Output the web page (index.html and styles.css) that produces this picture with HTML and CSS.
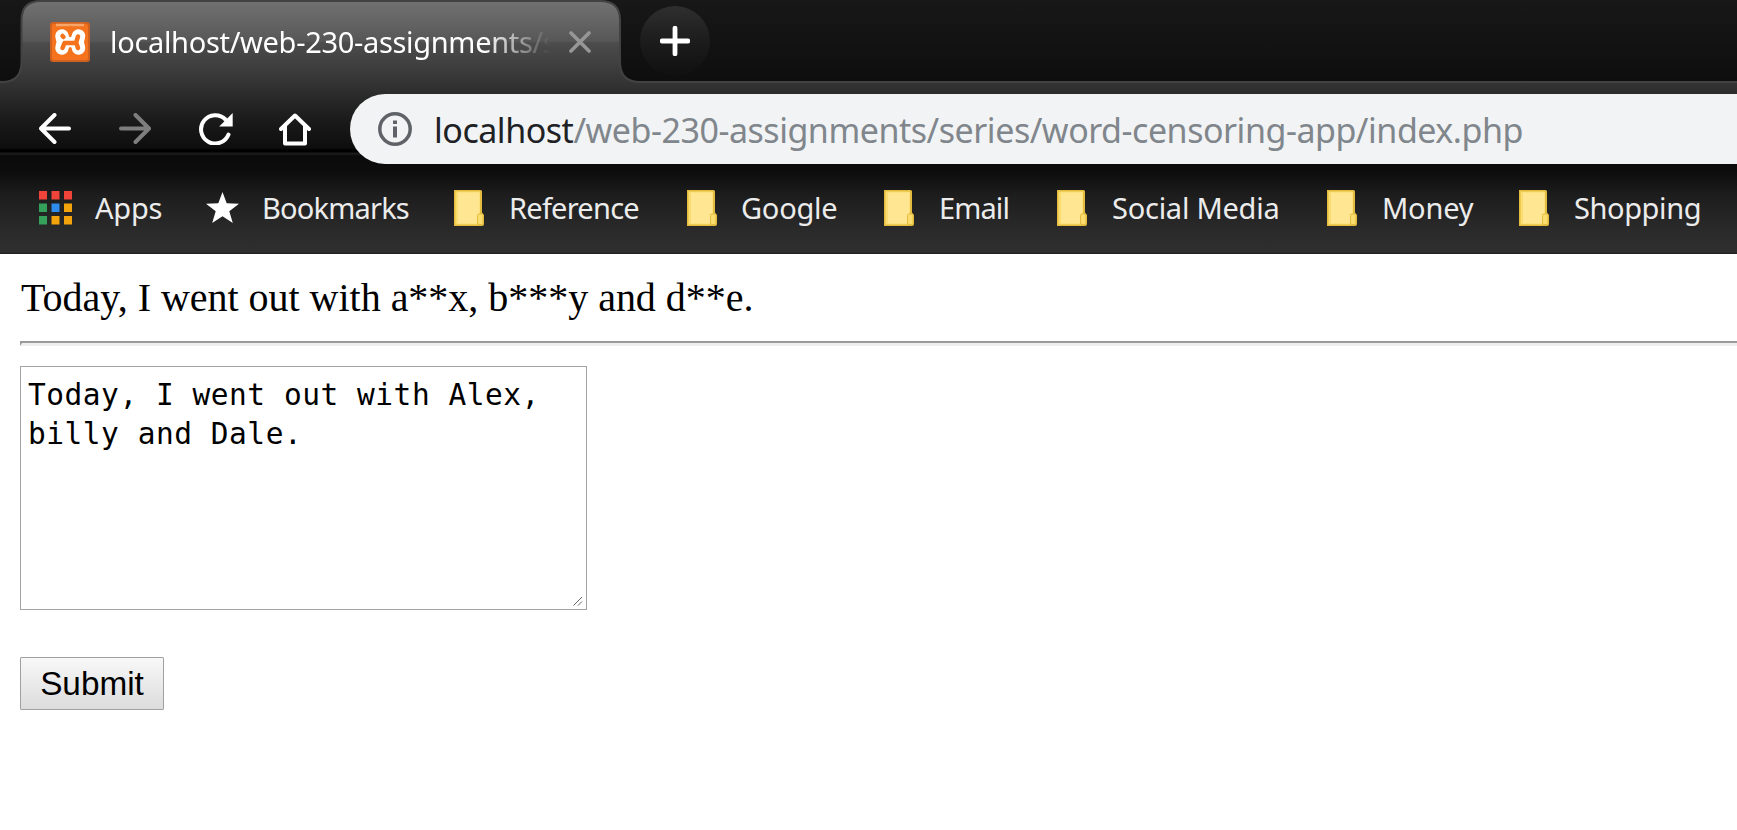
FILE: index.html
```html
<!DOCTYPE html>
<html lang="en">
<head>
<meta charset="utf-8">
<title>localhost/web-230-assignments/series/word-censoring-app/index.php</title>
<link rel="stylesheet" href="styles.css">
</head>
<body>
<svg class="defs" width="0" height="0" aria-hidden="true">
  <symbol id="folder" viewBox="0 0 30 36">
    <path d="M0 0H26.5Q28 0 28 1.5V22.5L30 25V34Q30 36 28 36H0Z" fill="#e3bc3f"/>
    <path d="M1.5 1.5H26V34.500H1.500Z" fill="#fbdc6f"/>
    <path d="M4 2.500H25.500V23L23 25.500V33.500H4Z" fill="#ffe692"/>
    <rect x="23.500" y="24" width="5.500" height="10.500" rx="1.500" fill="#fbdc6f" stroke="#e3bc3f"/>
  </symbol>
</svg>
<header class="browser">
  <div class="tabstrip">
    <svg class="strip-shape" width="1737" height="84" viewBox="0 0 1737 84">
      <path d="M-4 -4H1741V82H640Q620 82 620 62V20Q620 1 600 1H41Q21.500 1 21.500 20V62Q21.500 82 2 82H-4Z" fill="url(#stripfill)" stroke="#424242" stroke-width="2"/>
      <defs><linearGradient id="stripfill" x1="0" y1="0" x2="0" y2="1"><stop offset="0" stop-color="#181818"/><stop offset="1" stop-color="#0e0e0e"/></linearGradient></defs>
    </svg>
    <div class="tab">
      <svg class="favicon" width="40" height="40" viewBox="0 0 40 40">
        <rect width="40" height="40" rx="3" fill="#cf6220"/>
        <rect x="2" y="2" width="36" height="36" rx="2" fill="#f4731c"/>
        <path d="M6 3H34" stroke="#f7a66c" stroke-width="2.500"/>
        <path d="M12 14L13.500 20L12 26M28.500 14L27 20L28.500 26M13 20H27" fill="none" stroke="#fff" stroke-width="13.500" stroke-linejoin="round" stroke-linecap="round"/>
        <path d="M20.200 5V13.500M20.200 26.500V35" stroke="#f4731c" stroke-width="3" stroke-linecap="round"/>
        <path d="M12.500 26L14.500 21H26L28 14.500M26 20L28 26M12.500 14L13.500 15" fill="none" stroke="#f4731c" stroke-width="4.500" stroke-linejoin="round" stroke-linecap="round"/>
      </svg>
      <span class="tab-title">localhost/web-230-assignments/s</span>
      <svg class="tab-close" width="22" height="22" viewBox="0 0 22 22"><path d="M2 2L20 20M20 2L2 20" stroke="#979797" stroke-width="3.600" stroke-linecap="round"/></svg>
    </div>
    <div class="new-tab"><svg width="30" height="30" viewBox="0 0 30 30"><path d="M15 2.200V27.800M2.200 15H27.800" stroke="#fff" stroke-width="4.800" stroke-linecap="round"/></svg></div>
  </div>
  <nav class="toolbar">
    <svg class="nav-icon" width="32" height="32" viewBox="0 0 32 32"><path d="M15.500 2L2 15.500L15.500 29M2.500 15.500H30" fill="none" stroke="#fff" stroke-width="4" stroke-linecap="round" stroke-linejoin="round"/></svg>
    <svg class="nav-icon" width="32" height="32" viewBox="0 0 32 32"><path d="M16.500 2L30 15.500L16.500 29M29.500 15.500H2" fill="none" stroke="#7e7e7e" stroke-width="4" stroke-linecap="round" stroke-linejoin="round"/></svg>
    <svg class="nav-icon" width="34" height="32" viewBox="0 0 34 32"><path d="M26.500 6.500A14.200 14.200 0 1 0 29.500 21.500" fill="none" stroke="#fff" stroke-width="4" stroke-linecap="round"/><path d="M33.700 0V13.500H20.200Z" fill="#fff"/></svg>
    <svg class="nav-icon" width="32" height="33" viewBox="0 0 32 33"><path d="M2 16L16 2.500L30 16M6 13.500V30.500H26V13.500" fill="none" stroke="#fff" stroke-width="4" stroke-linecap="round" stroke-linejoin="round"/></svg>
    <div class="omnibox">
      <svg class="info" width="34" height="34" viewBox="0 0 34 34"><circle cx="17" cy="17" r="15.200" fill="none" stroke="#5f6368" stroke-width="3.500"/><path d="M17 14.500V25.500M17 8.500V12" stroke="#5f6368" stroke-width="4"/></svg>
      <span class="url"><span class="host">localhost</span><span class="path">/web-230-assignments/series/word-censoring-app/index.php</span></span>
    </div>
  </nav>
  <nav class="bookmarks">
    <a class="bm apps"><svg width="33" height="34" viewBox="0 0 33 34"><path d="M0 0H8V8.500H0ZM12.500 0H20.500V8.500H12.500ZM25 0H33V8.500H25Z" fill="#f0433a"/><path d="M0 12.500H8V21H0ZM0 25H8V33.500H0Z" fill="#34a05a"/><path d="M12.500 12.500H20.500V21H12.500Z" fill="#2e8cec"/><path d="M25 12.500H33V21H25ZM12.500 25H20.500V33.500H12.500ZM25 25H33V33.500H25Z" fill="#f3a40c"/></svg><span class="label">Apps</span></a>
    <a class="bm marks"><svg width="33" height="32" viewBox="0 0 33 32"><path d="M16.500 0L20.700 11.300L33 11.800L23.300 19.300L26.800 31L16.500 24.300L6.200 31L9.700 19.300L0 11.800L12.300 11.300Z" fill="#fff"/></svg><span class="label">Bookmarks</span></a>
    <a class="bm reference"><svg width="30" height="36"><use href="#folder"/></svg><span class="label">Reference</span></a>
    <a class="bm google"><svg width="30" height="36"><use href="#folder"/></svg><span class="label">Google</span></a>
    <a class="bm email"><svg width="30" height="36"><use href="#folder"/></svg><span class="label">Email</span></a>
    <a class="bm social"><svg width="30" height="36"><use href="#folder"/></svg><span class="label">Social Media</span></a>
    <a class="bm money"><svg width="30" height="36"><use href="#folder"/></svg><span class="label">Money</span></a>
    <a class="bm shopping"><svg width="30" height="36"><use href="#folder"/></svg><span class="label">Shopping</span></a>
  </nav>
</header>
<main class="page">
  <div class="result">Today, I went out with a**x, b***y and d**e.</div>
  <div class="rule"></div>
  <form class="form">
    <div class="box">Today, I went out with Alex,<br>billy and Dale.<svg class="grip" width="10" height="10" viewBox="0 0 10 10"><path d="M0.500 9.500L9 1M5 9.500L9 5.500" stroke="#666" stroke-width="1"/></svg></div>
    <button class="submit" type="button">Submit</button>
  </form>
</main>
</body>
</html>
```
FILE: styles.css
```css
* { box-sizing: border-box; }
html, body { height: 100%; }
body { margin: 0; overflow: hidden; background: #fff; }
.defs { position: absolute; }
svg { flex: none; display: block; }

.browser {
  display: flex;
  flex-direction: column;
  height: 254px;
  font-family: "Noto Sans", "Open Sans", sans-serif;
  background: linear-gradient(#727272 0, #626262 25px, #575757 41px, #4c4c4c 43px, #3d3d3d 68px, #333 84px, #252525 103px, #181818 125px, #0e0e0e 148px, #000 150px, #000 152px, #1b1b1b 153px, #1b1b1b 154px, #0a0a0a 156px, #0d0d0d 172px, #1d1d1d 195px, #2a2a2a 230px, #2f2f2f 252px, #1c1c1c 254px);
}

.tabstrip { position: relative; display: flex; height: 83px; }
.strip-shape { position: absolute; inset: 0; }
.tab { position: relative; display: flex; align-items: center; width: 600px; height: 83px; margin-left: 20px; padding: 0 0 0 30px; }
.tab-title {
  width: 440px;
  margin-left: 20px;
  white-space: nowrap;
  color: #fff;
  font-size: 29px;
  letter-spacing: -0.32px;
  line-height: 40px;
  -webkit-mask-image: linear-gradient(90deg, #000 375px, transparent 440px);
  mask-image: linear-gradient(90deg, #000 375px, transparent 440px);
}
.tab-close { margin-left: 19px; }
.new-tab {
  position: relative;
  display: grid;
  place-items: center;
  width: 70px;
  height: 70px;
  margin: 6px 0 0 20px;
  border-radius: 50%;
  background: linear-gradient(#2f2f2f, #1c1c1c 50%, #101010);
}

.toolbar { display: flex; height: 81px; padding: 11px 0 0 39px; }
.nav-icon { margin: 19px 48px 0 0; }
.nav-icon:nth-child(3) { margin-right: 46px; }
.nav-icon:nth-child(4) { margin-right: 39px; }
.omnibox {
  display: flex;
  align-items: center;
  flex: 1;
  height: 70px;
  padding-left: 28px;
  border-radius: 35px 0 0 35px;
  background: #f1f3f4;
}
.url { display: flex; margin-left: 22px; padding-top: 1px; white-space: nowrap; font-size: 34px; line-height: 50px; letter-spacing: -0.47px; }
.host { color: #202124; }
.path { color: #80868b; }

.bookmarks { display: flex; flex: 1; padding: 9px 0 0 20px; color: #ececec; font-size: 29px; line-height: 70px; white-space: nowrap; }
.bm { display: flex; align-items: center; height: 70px; }
.label { margin-left: 25px; letter-spacing: -0.5px; }
.apps { width: 186px; padding-left: 19px; }
.apps .label { margin-left: 23px; letter-spacing: -0.2px; }
.marks { width: 248px; }
.marks .label { margin-left: 23px; letter-spacing: -0.8px; }
.reference { width: 233px; }
.reference .label { letter-spacing: -0.75px; }
.google { width: 197px; }
.google .label { margin-left: 24px; letter-spacing: -0.25px; }
.email { width: 173px; }
.email .label { letter-spacing: -0.9px; }
.social { width: 270px; }
.social .label { letter-spacing: -0.25px; }
.money { width: 192px; }
.money .label { letter-spacing: -0.2px; }
.shopping .label { letter-spacing: -0.4px; }

.page { padding: 20px 0 0 20px; }
.result { height: 67px; padding: 1px 0 0 1px; font: 40px/46px "Liberation Serif", "Times New Roman", serif; color: #000; letter-spacing: -0.02px; }
.rule { height: 5px; border: solid #eee; border-width: 2px 0 3px 2px; border-top-color: #9a9a9a; border-left-color: #9a9a9a; }
.form { margin: 0; padding-top: 20px; }
.box {
  position: relative;
  width: 567px;
  height: 244px;
  padding: 9px 7px;
  border: 1px solid #a3a3a3;
  font: 29.5px/39px "DejaVu Sans Mono", "Liberation Mono", monospace;
  letter-spacing: 0.52px;
  white-space: nowrap;
}
.grip { position: absolute; right: 3px; bottom: 3px; }
.submit {
  display: block;
  width: 144px;
  height: 53px;
  margin-top: 47px;
  padding: 0;
  border: 1px solid #a0a0a0;
  border-radius: 1px;
  background: linear-gradient(#f8f8f8, #dcdcdc);
  color: #000;
  font: 33.33px/49px "Liberation Sans", Arial, sans-serif;
}
```
